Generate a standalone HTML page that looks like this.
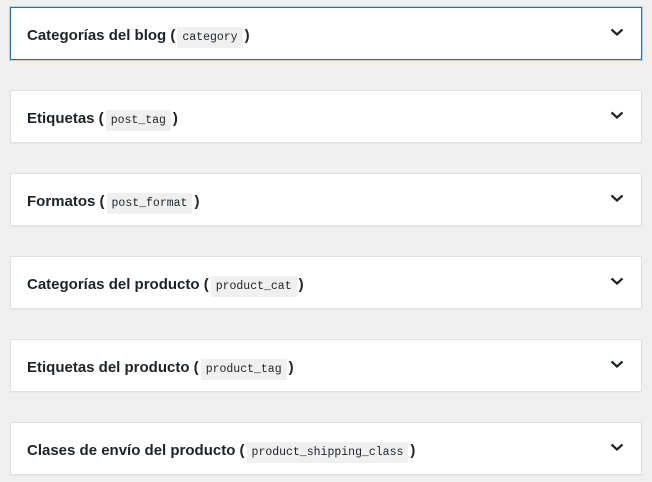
<html><head><style>
body{margin:0;background:#f0f0f1;width:652px;height:482px;overflow:hidden;font-family:"Liberation Sans",sans-serif;}
.c{position:absolute;left:10px;width:630px;height:51px;background:#fff;border:1px solid #e0e0e0;box-shadow:0 1px 1px rgba(0,0,0,.04);}
.c.f{border:1px solid #2271b1;box-shadow:0 0 0 1px rgba(34,113,177,.25);}
.t{position:absolute;left:16px;top:19px;font-size:15px;font-weight:600;color:#1d2327;white-space:nowrap;}
code{font-family:"Liberation Mono",monospace;font-size:11.5px;background:#f0f0f1;padding:4px 5px;font-weight:normal;margin:0 2px;color:#1d2327;}
svg{position:absolute;right:17px;top:19px;}
</style></head><body>
<div class="c f" style="top:7px"><div class="t">Categorías del blog (<code>category</code>)</div><svg width="14" height="10"><path d="M1.5 2.5 L7 7.5 L12.5 2.5" stroke="#1d2327" stroke-width="2.2" fill="none"/></svg></div>
<div class="c" style="top:90px"><div class="t">Etiquetas (<code>post_tag</code>)</div><svg width="14" height="10"><path d="M1.5 2.5 L7 7.5 L12.5 2.5" stroke="#1d2327" stroke-width="2.2" fill="none"/></svg></div>
<div class="c" style="top:173px"><div class="t">Formatos (<code>post_format</code>)</div><svg width="14" height="10"><path d="M1.5 2.5 L7 7.5 L12.5 2.5" stroke="#1d2327" stroke-width="2.2" fill="none"/></svg></div>
<div class="c" style="top:256px"><div class="t">Categorías del producto (<code>product_cat</code>)</div><svg width="14" height="10"><path d="M1.5 2.5 L7 7.5 L12.5 2.5" stroke="#1d2327" stroke-width="2.2" fill="none"/></svg></div>
<div class="c" style="top:339px"><div class="t">Etiquetas del producto (<code>product_tag</code>)</div><svg width="14" height="10"><path d="M1.5 2.5 L7 7.5 L12.5 2.5" stroke="#1d2327" stroke-width="2.2" fill="none"/></svg></div>
<div class="c" style="top:422px"><div class="t">Clases de envío del producto (<code>product_shipping_class</code>)</div><svg width="14" height="10"><path d="M1.5 2.5 L7 7.5 L12.5 2.5" stroke="#1d2327" stroke-width="2.2" fill="none"/></svg></div>
</body></html>
